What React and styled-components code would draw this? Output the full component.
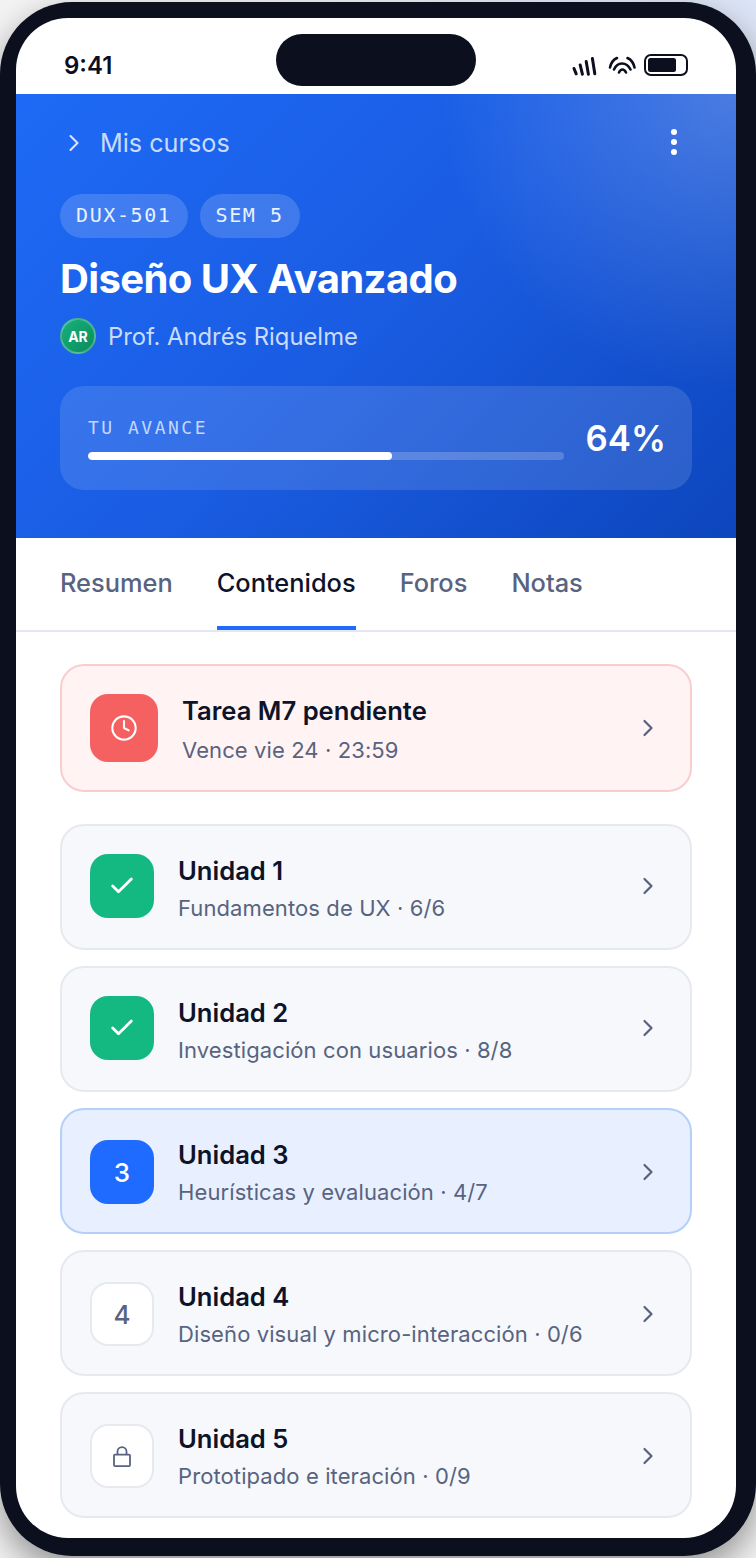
import React from "react";
import styled, { createGlobalStyle } from "styled-components";
import { ChevronRight, Clock, Check } from "lucide-react";

const GlobalStyle = createGlobalStyle`
    html, body {
        margin: 0;
        padding: 0;
    }
    body {
        width: 756px;
        height: 1558px;
        overflow: hidden;
        font-family: "Inter", "Noto Sans", sans-serif;
        background:
            radial-gradient(circle at 100% 0%, #dbe4f6 0%, rgba(219, 228, 246, 0) 30%),
            #f3f3f4;
    }
`;

const Frame = styled.div`
    box-sizing: border-box;
    width: 756px;
    height: 1554px;
    margin-top: 2px;
    padding: 16px 20px 18px 16px;
    background: #0b0f1e;
    border-radius: 72px;
    box-shadow: 0 14px 34px rgba(0, 0, 0, 0.4);
`;

const Screen = styled.div`
    height: 100%;
    background: #fff;
    border-radius: 52px;
    overflow: hidden;
    display: flex;
    flex-direction: column;
    position: relative;
`;

const Notch = styled.div`
    position: absolute;
    top: 16px;
    left: 260px;
    width: 200px;
    height: 52px;
    border-radius: 26px;
    background: #0b0f1e;
`;

const StatusBar = styled.div`
    flex: none;
    box-sizing: border-box;
    height: 76px;
    padding: 32px 48px 0 48px;
    display: flex;
    justify-content: space-between;
    align-items: flex-start;
`;

const Time = styled.span`
    margin-top: 1px;
    font-size: 24px;
    line-height: 30px;
    font-weight: 600;
    color: #0b0f1e;
`;

const StatusIcons = styled.div`
    display: flex;
    align-items: center;
    gap: 8px;
    margin-top: 4px;
`;

const SignalIcon = styled.svg`
    margin-right: 2px;
`;

const Hero = styled.header`
    flex: none;
    box-sizing: border-box;
    height: 444px;
    padding: 29px 44px 0 44px;
    display: flex;
    flex-direction: column;
    background:
        radial-gradient(circle at 100% 0%, rgba(255, 255, 255, 0.22) 0%, rgba(255, 255, 255, 0) 35%),
        linear-gradient(135deg, #1e6af6 0%, #1a5ce2 50%, #0d46bd 100%);
`;

const HeroNav = styled.div`
    display: flex;
    align-items: center;
    height: 40px;
    color: #c9dcff;
    font-size: 25.2px;
    gap: 12px;
`;

const BackIcon = styled(ChevronRight)`
    color: #dbe7ff;
`;

const MoreButton = styled.div`
    margin-left: auto;
    margin-right: 15px;
    margin-bottom: 2px;
    display: flex;
    flex-direction: column;
    gap: 4px;
`;

const Dot = styled.span`
    width: 6px;
    height: 6px;
    border-radius: 50%;
    background: #fff;
`;

const ChipRow = styled.div`
    display: flex;
    gap: 12px;
    margin-top: 31px;
`;

const Chip = styled.span`
    box-sizing: border-box;
    height: 44px;
    padding: 0 16px;
    border-radius: 22px;
    background: rgba(255, 255, 255, 0.16);
    color: #eaf1ff;
    font-family: "DejaVu Sans Mono", monospace;
    font-size: 20px;
    line-height: 42px;
    letter-spacing: 1.6px;
`;

const Title = styled.h1`
    margin: 16px 0 0 0;
    font-size: 40px;
    line-height: 50px;
    font-weight: 700;
    letter-spacing: -0.6px;
    color: #fff;
`;

const Teacher = styled.div`
    display: flex;
    align-items: center;
    gap: 12px;
    margin-top: 14px;
    color: #c9dcff;
    font-size: 23.8px;
`;

const Avatar = styled.span`
    box-sizing: border-box;
    width: 36px;
    height: 36px;
    border-radius: 50%;
    border: 2px solid rgba(255, 255, 255, 0.25);
    background: linear-gradient(135deg, #16b27a, #0c8a5e);
    color: #fff;
    font-size: 14px;
    font-weight: 700;
    display: flex;
    align-items: center;
    justify-content: center;
`;

const ProgressCard = styled.div`
    box-sizing: border-box;
    height: 104px;
    margin-top: 32px;
    padding: 0 26px 0 28px;
    border-radius: 24px;
    background: rgba(255, 255, 255, 0.12);
    display: flex;
    align-items: center;
    gap: 22px;
`;

const ProgressBody = styled.div`
    flex: 1;
    display: flex;
    flex-direction: column;
    gap: 14px;
    margin-top: 2px;
`;

const ProgressLabel = styled.span`
    font-family: "DejaVu Sans Mono", monospace;
    font-size: 18px;
    line-height: 20px;
    letter-spacing: 2.5px;
    color: #c4d7ff;
`;

const Track = styled.div`
    height: 8px;
    border-radius: 4px;
    background: rgba(255, 255, 255, 0.2);
    overflow: hidden;
`;

const Fill = styled.div`
    height: 100%;
    border-radius: 4px;
    background: #fff;
`;

const Percent = styled.span`
    font-size: 34.8px;
    font-weight: 600;
    color: #fff;
`;

const Tabs = styled.nav`
    flex: none;
    box-sizing: border-box;
    height: 94px;
    padding: 0 44px;
    display: flex;
    gap: 44px;
    border-bottom: 2px solid #e4e7ee;
`;

const Tab = styled.span`
    box-sizing: border-box;
    height: 92px;
    line-height: 90px;
    font-size: 25.4px;
    font-weight: 500;
    color: ${(p) => (p.$active ? "#0d1328" : "#586380")};
    border-bottom: 4px solid ${(p) => (p.$active ? "#1f6bff" : "transparent")};
`;

const Content = styled.main`
    flex: 1;
    padding: 32px 44px 0 44px;
    display: flex;
    flex-direction: column;
    gap: 16px;
`;

const Row = styled.div`
    box-sizing: border-box;
    flex: none;
    height: ${(p) => (p.$alert ? "128px" : "126px")};
    margin-bottom: ${(p) => (p.$alert ? "16px" : "0")};
    padding: 0 28px;
    border-radius: 24px;
    border: 2px solid ${(p) => p.$border};
    background: ${(p) => p.$bg};
    display: flex;
    align-items: center;
    gap: 24px;
`;

const Badge = styled.div`
    flex: none;
    box-sizing: border-box;
    width: ${(p) => p.$size}px;
    height: ${(p) => p.$size}px;
    margin: ${(p) => (p.$low ? "2px 0 0 0" : p.$size === 64 ? "0 0 2px 0" : "0")};
    border-radius: 18px;
    background: ${(p) => p.$bg};
    border: ${(p) => (p.$outlined ? "2px solid #e6e9ee" : "none")};
    color: ${(p) => p.$color};
    font-size: 26px;
    font-weight: 500;
    display: flex;
    align-items: center;
    justify-content: center;
`;

const RowText = styled.div`
    flex: 1;
    min-width: 0;
    padding-top: ${(p) => (p.$alert ? "2px" : "3px")};
    display: flex;
    flex-direction: column;
    gap: ${(p) => (p.$alert ? "9px" : "7px")};
`;

const RowTitle = styled.span`
    font-size: 25.6px;
    line-height: 32px;
    font-weight: 600;
    color: #0d1328;
`;

const RowSub = styled.span`
    font-size: 22px;
    line-height: 28px;
    color: #586380;
    letter-spacing: 0.1px;
`;

const RowChevron = styled(ChevronRight)`
    flex: none;
    color: #586380;
    margin: ${(p) => (p.$low ? "2px 0 0 0" : p.$alert ? "0" : "0 0 2px 0")};
`;

const units = [
    { id: 1, sub: "Fundamentos de UX · 6/6", state: "done" },
    { id: 2, sub: "Investigación con usuarios · 8/8", state: "done" },
    { id: 3, sub: "Heurísticas y evaluación · 4/7", state: "current" },
    { id: 4, sub: "Diseño visual y micro-interacción · 0/6", state: "next" },
    { id: 5, sub: "Prototipado e iteración · 0/9", state: "locked" },
];

const UnitBadge = ({ unit }) => {
    const low = unit.id > 2;
    if (unit.state === "done") {
        return (
            <Badge $size={64} $low={low} $bg="#14b981" $color="#fff">
                <Check size={28} strokeWidth={2.4} />
            </Badge>
        );
    }
    if (unit.state === "current") {
        return <Badge $size={64} $low={low} $bg="#1f6bff" $color="#fff">3</Badge>;
    }
    if (unit.state === "next") {
        return <Badge $size={64} $low={low} $bg="#fff" $color="#586380" $outlined>4</Badge>;
    }
    return (
        <Badge $size={64} $low={low} $bg="#fff" $color="#586380" $outlined>
            <svg width="18" height="21" viewBox="0 0 18 21" fill="none" stroke="currentColor" strokeWidth="1.8">
                <rect x="1" y="8.6" width="16" height="11.5" rx="1" />
                <path d="M4.5 8.6 V5.6 a4.5 4.5 0 0 1 9 0 V8.6" />
            </svg>
        </Badge>
    );
};

const StatusGlyphs = () => (
    <StatusIcons>
        <SignalIcon width="26" height="22" viewBox="0 0 26 22" fill="none" stroke="#0b0f1e" strokeWidth="3" strokeLinecap="round">
            <path d="M2 14.5 L4.2 19.8" />
            <path d="M8.2 11 L10.4 20.2" />
            <path d="M14.2 7.5 L16.4 20.2" />
            <path d="M20.4 4.5 L22.8 19.8" />
        </SignalIcon>
        <svg width="28" height="22" viewBox="0 0 28 22" fill="none" stroke="#0b0f1e" strokeWidth="2.6" strokeLinecap="round">
            <path d="M2 13.5 C3 9 5.5 5.5 9 4" />
            <path d="M19.5 4 C23 5.5 25.5 9 26.5 13.5" />
            <path d="M6 15.5 C8 11 11 9.5 14 9.5 C17 9.5 20.5 11.5 22.5 15.5" />
            <path d="M11 18.5 C12 16.5 13 15.5 14.3 15.5 C15.5 15.5 17 16.5 18 18.5" />
        </svg>
        <svg width="44" height="22" viewBox="0 0 44 22" fill="none">
            <rect x="1" y="1" width="42" height="20" rx="6" stroke="#0b0f1e" strokeWidth="2" />
            <rect x="4" y="4" width="28" height="14" rx="2.5" fill="#0b0f1e" />
        </svg>
    </StatusIcons>
);

const App = () => (
    <>
        <GlobalStyle />
        <Frame>
            <Screen>
                <Notch />
                <StatusBar>
                    <Time>9:41</Time>
                    <StatusGlyphs />
                </StatusBar>
                <Hero>
                    <HeroNav>
                        <BackIcon size={28} strokeWidth={1.8} />
                        <span>Mis cursos</span>
                        <MoreButton>
                            <Dot />
                            <Dot />
                            <Dot />
                        </MoreButton>
                    </HeroNav>
                    <ChipRow>
                        <Chip>DUX-501</Chip>
                        <Chip>SEM 5</Chip>
                    </ChipRow>
                    <Title>Diseño UX Avanzado</Title>
                    <Teacher>
                        <Avatar>AR</Avatar>
                        Prof. Andrés Riquelme
                    </Teacher>
                    <ProgressCard>
                        <ProgressBody>
                            <ProgressLabel>TU AVANCE</ProgressLabel>
                            <Track>
                                <Fill style={{ width: "64%" }} />
                            </Track>
                        </ProgressBody>
                        <Percent>64%</Percent>
                    </ProgressCard>
                </Hero>
                <Tabs>
                    <Tab>Resumen</Tab>
                    <Tab $active>Contenidos</Tab>
                    <Tab>Foros</Tab>
                    <Tab>Notas</Tab>
                </Tabs>
                <Content>
                    <Row $alert $bg="#fff3f3" $border="#f8cdcd">
                        <Badge $size={68} $bg="#f56060" $color="#fff">
                            <Clock size={28} strokeWidth={1.8} />
                        </Badge>
                        <RowText $alert>
                            <RowTitle>Tarea M7 pendiente</RowTitle>
                            <RowSub>Vence vie 24 · 23:59</RowSub>
                        </RowText>
                        <RowChevron $alert size={28} strokeWidth={1.9} />
                    </Row>
                    {units.map((unit) => (
                        <Row
                            key={unit.id}
                            $bg={unit.state === "current" ? "#e8f0ff" : "#f6f8fb"}
                            $border={unit.state === "current" ? "#b4d0f8" : "#e6e9ee"}
                        >
                            <UnitBadge unit={unit} />
                            <RowText>
                                <RowTitle>Unidad {unit.id}</RowTitle>
                                <RowSub>{unit.sub}</RowSub>
                            </RowText>
                            <RowChevron $low={unit.id > 2} size={28} strokeWidth={1.9} />
                        </Row>
                    ))}
                </Content>
            </Screen>
        </Frame>
    </>
);

export default App;
